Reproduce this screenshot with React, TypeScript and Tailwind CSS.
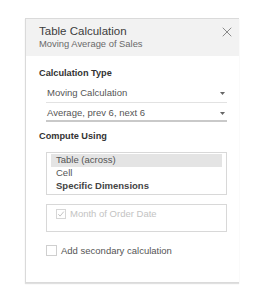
import { X } from "lucide-react";

const Caret = () => (
    <svg width="5" height="3" viewBox="0 0 5 3" className="mr-[2px]">
        <path d="M0 0h5L2.5 3z" fill="#666" />
    </svg>
);

const Dropdown = ({ label, strong }: { label: string; strong?: boolean }) => (
    <div
        className={
            strong
                ? "flex h-[15px] items-center justify-between border-b-2 border-[#c9c9c9] pl-[1px]"
                : "flex h-[19px] items-center justify-between border-b border-[#e2e2e2] pl-[1px]"
        }
    >
        <span>{label}</span>
        <Caret />
    </div>
);

const Box = ({ checked, disabled }: { checked?: boolean; disabled?: boolean }) => (
    <div
        className={
            disabled
                ? "flex size-[10px] items-center justify-center border border-[#d6d6d6] bg-white"
                : "flex size-[11px] items-center justify-center border border-[#cfcfcf] bg-white"
        }
    >
        {checked && (
            <svg width="8" height="8" viewBox="0 0 8 8">
                <path d="M1.3 4.2l1.8 1.9L6.8 1.6" fill="none" stroke="#c4c4c4" strokeWidth="1" />
            </svg>
        )}
    </div>
);

export default function App() {
    return (
        <div className="h-[289px] w-[280px] bg-white pl-[25px] pt-[18px] font-['Liberation_Sans',Arial,sans-serif]">
            <div className="h-[265px] w-[214px] border-y border-l border-[#dadada] shadow-[0_1px_1px_rgba(0,0,0,0.12)]">
                <div className="flex h-[37px] justify-between bg-[#f2f2f2] pl-[13px] pr-[4px] pt-[5px]">
                    <div>
                        <div className="text-[11.5px] leading-[14px] text-[#3c3c3c]">Table Calculation</div>
                        <div className="text-[9.4px] leading-[12px] text-[#6a6a6a]">Moving Average of Sales</div>
                    </div>
                    <X className="size-[16px] text-[#8a8a8a]" strokeWidth={1.5} />
                </div>

                <div className="pl-[13px] text-[9.5px] text-[#555]">
                    <div className="mt-[11px] text-[9.2px] font-bold leading-[12px] text-[#333]">Calculation Type</div>
                    <div className="ml-[7px] mt-[5px] w-[181px]">
                        <Dropdown label="Moving Calculation" />
                        <div className="mt-[4px]">
                            <Dropdown label="Average, prev 6, next 6" strong />
                        </div>
                    </div>

                    <div className="mt-[8px] text-[9.2px] font-bold leading-[12px] text-[#333]">Compute Using</div>
                    <div className="ml-[7px] mt-[10px] w-[181px] border border-[#d8d8d8] px-[4px] pt-[1px] pb-[1px]">
                        <div className="flex h-[13px] items-center bg-[#e4e4e4] pl-[5px]">Table (across)</div>
                        <div className="flex h-[13px] items-center pl-[5px]">Cell</div>
                        <div className="flex h-[13px] items-center pl-[5px] font-bold text-[#444]">Specific Dimensions</div>
                    </div>

                    <div className="ml-[7px] mt-[9px] h-[28px] w-[181px] border border-[#d8d8d8] pl-[9px] pt-[3px]">
                        <div className="flex items-center gap-[4px] text-[#c3c3c3]">
                            <Box checked disabled />
                            <span className="leading-[11px]">Month of Order Date</span>
                        </div>
                    </div>

                    <div className="ml-[7px] mt-[13px] flex items-center gap-[4px]">
                        <Box />
                        <span className="leading-[11px]">Add secondary calculation</span>
                    </div>
                </div>
            </div>
        </div>
    );
}
